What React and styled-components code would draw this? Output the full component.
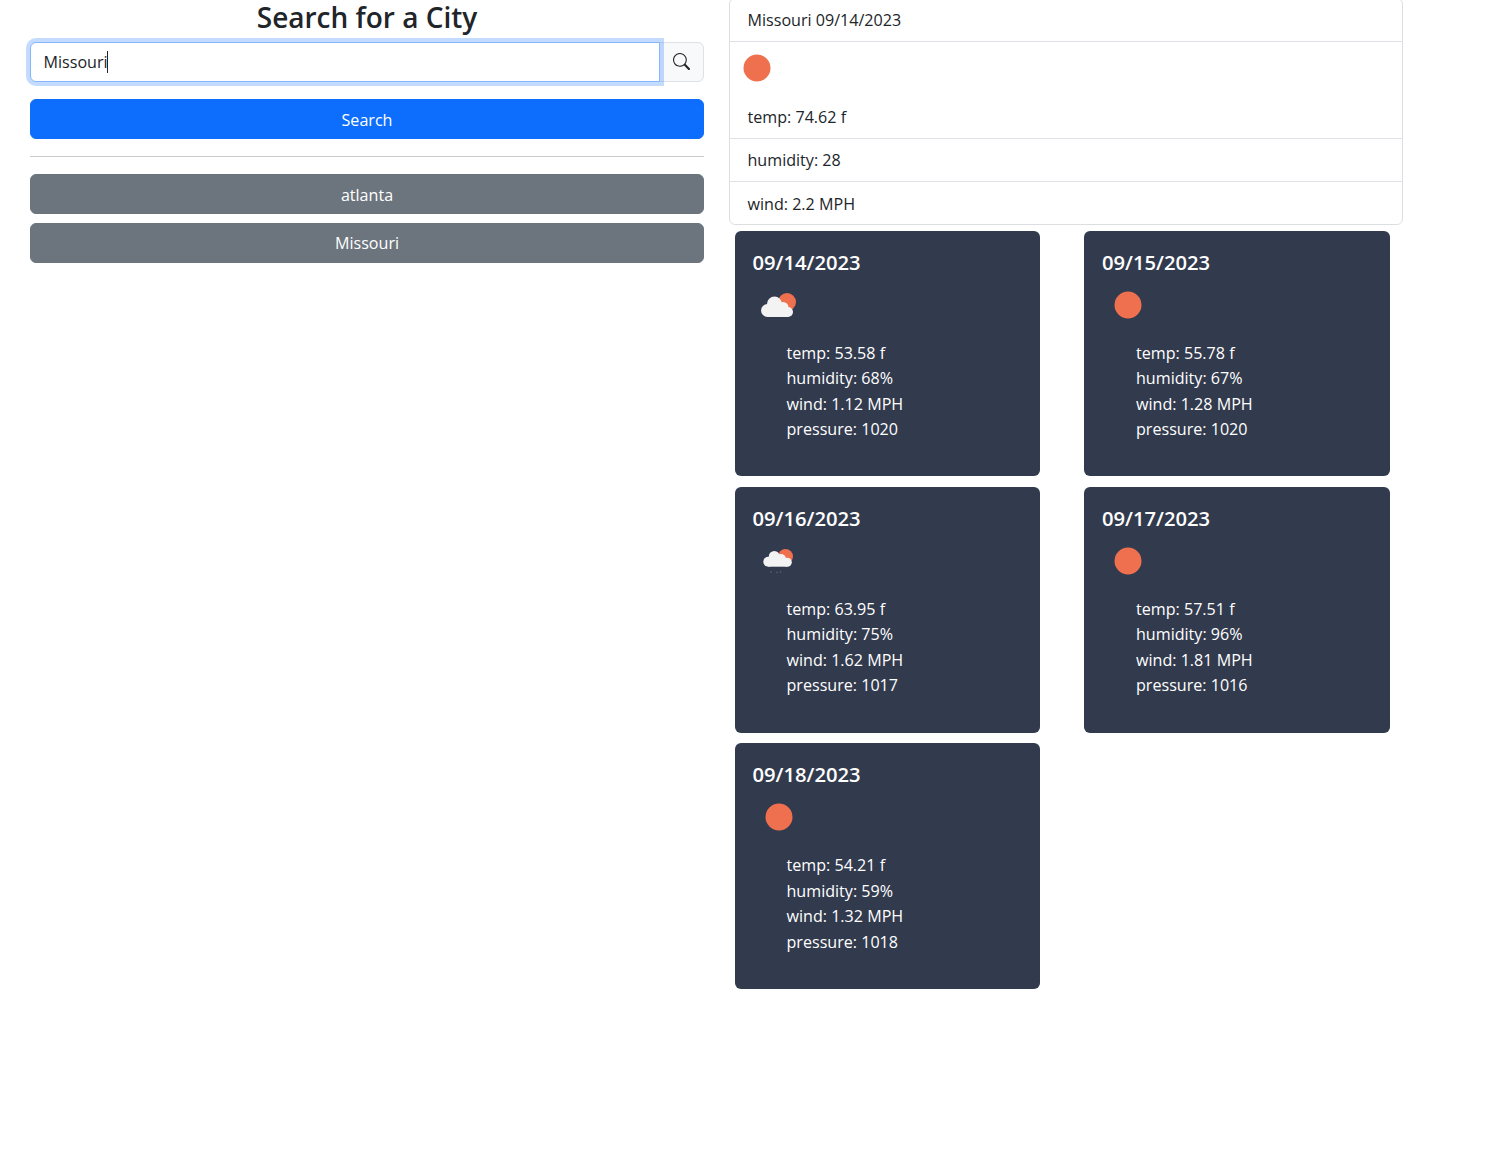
import React from "react";
import styled, { createGlobalStyle } from "styled-components";

const Global = createGlobalStyle`
  html { font-size: 17px; }
  body {
    margin: 0;
    background: #fff;
    color: #212529;
    font-family: "Open Sans", "Noto Sans", sans-serif;
    font-size: 16.1px;
    line-height: 25.5px;
  }
  * { box-sizing: border-box; }
`;

const Page = styled.div`
  display: grid;
  grid-template-columns: 674px 674px;
  column-gap: 25px;
  padding-left: 30px;
  width: 1511px;
  min-height: 1158px;
  align-items: start;
`;

const LeftColumn = styled.section`
  display: flex;
  flex-direction: column;
`;

const Title = styled.h2`
  margin: 0 0 5px;
  height: 37px;
  font-size: 28px;
  line-height: 34px;
  font-weight: 600;
  text-align: center;
`;

const InputGroup = styled.div`
  display: flex;
  height: 40px;
  margin-bottom: 17px;
`;

const Field = styled.div`
  flex: 1;
  position: relative;
  z-index: 1;
  display: flex;
  align-items: center;
  padding: 2px 12.5px 0;
  background: #fff;
  border: 1px solid #86b7fe;
  border-radius: 6px 0 0 6px;
  box-shadow: 0 0 0 4px rgba(13, 110, 253, 0.25);
`;

const Caret = styled.span`
  display: inline-block;
  width: 1px;
  height: 22px;
  margin: -2px 0 0 -0.5px;
  background: #212529;
`;

const Addon = styled.div`
  width: 45px;
  margin-left: -1px;
  padding-bottom: 2px;
  display: flex;
  align-items: center;
  justify-content: center;
  background: #f8f9fa;
  border: 1px solid #dee2e6;
  border-radius: 0 6px 6px 0;
  color: #212529;
`;

const Button = styled.button`
  display: block;
  width: 100%;
  height: 40px;
  padding: 2.500px 0 0;
  border: 1px solid ${(p) => (p.$primary ? "#0d6efd" : "#6c757d")};
  border-radius: 6px;
  background: ${(p) => (p.$primary ? "#0d6efd" : "#6c757d")};
  color: #fff;
  font: inherit;
  text-align: center;
`;

const Rule = styled.hr`
  width: 100%;
  margin: 17px 0;
  border: 0;
  border-top: 1px solid #cbcccd;
`;

const HistoryList = styled.div`
  display: flex;
  flex-direction: column;
  gap: 8.6px;
`;

const RightColumn = styled.section`
  margin-top: -2.2px;
  display: flex;
  flex-direction: column;
`;

const TodayCard = styled.ul`
  list-style: none;
  margin: 0 0 5.2px;
  padding: 0;
  border: 1px solid #dcdfe2;
  border-radius: 6px;
`;

const TodayItem = styled.li`
  padding: 9.35px 17.5px 7.35px;
  & + & {
    border-top: 1px solid #dee2e6;
  }
`;

const TodayIcon = styled.div`
  margin: -8px 0 11.8px -15.5px;
  height: 50px;
`;

const ForecastGrid = styled.div`
  display: grid;
  grid-template-columns: 305.5px 305.5px;
  column-gap: 44px;
  row-gap: 10.4px;
  padding-left: 5.5px;
`;

const ForecastCard = styled.article`
  height: 245.8px;
  padding: 17px 18px;
  border-radius: 6px;
  background: #323a4e;
  color: #fff;
`;

const CardTitle = styled.h5`
  margin: 0;
  height: 28px;
  font-size: 20.2px;
  line-height: 28px;
  font-weight: 600;
`;

const CardIcon = styled.div`
  margin-left: 1px;
  height: 65.2px;
  padding-top: 4.4px;
`;

const StatList = styled.ul`
  list-style: none;
  margin: 0;
  padding-left: 34px;
`;

const Search = () => (
  <svg width="17" height="17" viewBox="0 0 16 16" fill="currentColor">
    <path d="M11.742 10.344a6.5 6.5 0 1 0-1.397 1.398h-.001c.03.04.062.078.098.115l3.85 3.85a1 1 0 0 0 1.415-1.414l-3.85-3.85a1.007 1.007 0 0 0-.115-.1zM12 6.5a5.5 5.5 0 1 1-11 0 5.5 5.5 0 0 1 11 0z" />
  </svg>
);

const Sun = () => (
  <svg width="50" height="50" viewBox="0 0 50 50" style={{ display: "block" }}>
    <circle cx="25" cy="25" r="13.5" fill="#ef704e" />
  </svg>
);

const Clouds = () => (
  <svg width="50" height="50" viewBox="0 0 50 50" style={{ display: "block" }}>
    <circle cx="33" cy="22" r="9" fill="#ef704e" />
    <g fill="#f3f3f3">
      <circle cx="13.500" cy="30.500" r="6.500" />
      <circle cx="20.500" cy="24" r="7.500" />
      <circle cx="29" cy="27.500" r="5.500" />
      <circle cx="34" cy="32" r="5" />
      <rect x="13.500" y="29" width="20.500" height="8" />
    </g>
  </svg>
);

const Rain = () => (
  <svg width="50" height="50" viewBox="0 0 50 50" style={{ display: "block" }}>
    <circle cx="31.500" cy="20.500" r="7.500" fill="#ef704e" />
    <g fill="#f3f3f3">
      <circle cx="14.300" cy="25.700" r="5" />
      <circle cx="20.300" cy="20.500" r="5.500" />
      <circle cx="27" cy="23" r="5" />
      <circle cx="33.300" cy="26.300" r="4.500" />
      <rect x="14.300" y="24" width="19" height="6.700" />
    </g>
    <g fill="#4e5568">
      <circle cx="17" cy="36" r="1" />
      <circle cx="23" cy="36.500" r="1" />
      <circle cx="26.500" cy="36" r="1" />
    </g>
  </svg>
);

const forecast = [
  { date: "09/14/2023", Icon: Clouds, temp: "53.58", humidity: "68", wind: "1.12", pressure: "1020" },
  { date: "09/15/2023", Icon: Sun, temp: "55.78", humidity: "67", wind: "1.28", pressure: "1020" },
  { date: "09/16/2023", Icon: Rain, temp: "63.95", humidity: "75", wind: "1.62", pressure: "1017" },
  { date: "09/17/2023", Icon: Sun, temp: "57.51", humidity: "96", wind: "1.81", pressure: "1016" },
  { date: "09/18/2023", Icon: Sun, temp: "54.21", humidity: "59", wind: "1.32", pressure: "1018" },
];

export default function App() {
  return (
    <Page>
      <Global />
      <LeftColumn>
        <Title>Search for a City</Title>
        <InputGroup>
          <Field>
            Missouri
            <Caret />
          </Field>
          <Addon>
            <Search />
          </Addon>
        </InputGroup>
        <Button $primary>Search</Button>
        <Rule />
        <HistoryList>
          <Button>atlanta</Button>
          <Button>Missouri</Button>
        </HistoryList>
      </LeftColumn>
      <RightColumn>
        <TodayCard>
          <TodayItem>Missouri 09/14/2023</TodayItem>
          <TodayItem>
            <TodayIcon>
              <Sun />
            </TodayIcon>
            temp: 74.62 f
          </TodayItem>
          <TodayItem>humidity: 28</TodayItem>
          <TodayItem>wind: 2.2 MPH</TodayItem>
        </TodayCard>
        <ForecastGrid>
          {forecast.map(({ date, Icon, temp, humidity, wind, pressure }) => (
            <ForecastCard key={date}>
              <CardTitle>{date}</CardTitle>
              <CardIcon>
                <Icon />
              </CardIcon>
              <StatList>
                <li>temp: {temp} f</li>
                <li>humidity: {humidity}%</li>
                <li>wind: {wind} MPH</li>
                <li>pressure: {pressure}</li>
              </StatList>
            </ForecastCard>
          ))}
        </ForecastGrid>
      </RightColumn>
    </Page>
  );
}
